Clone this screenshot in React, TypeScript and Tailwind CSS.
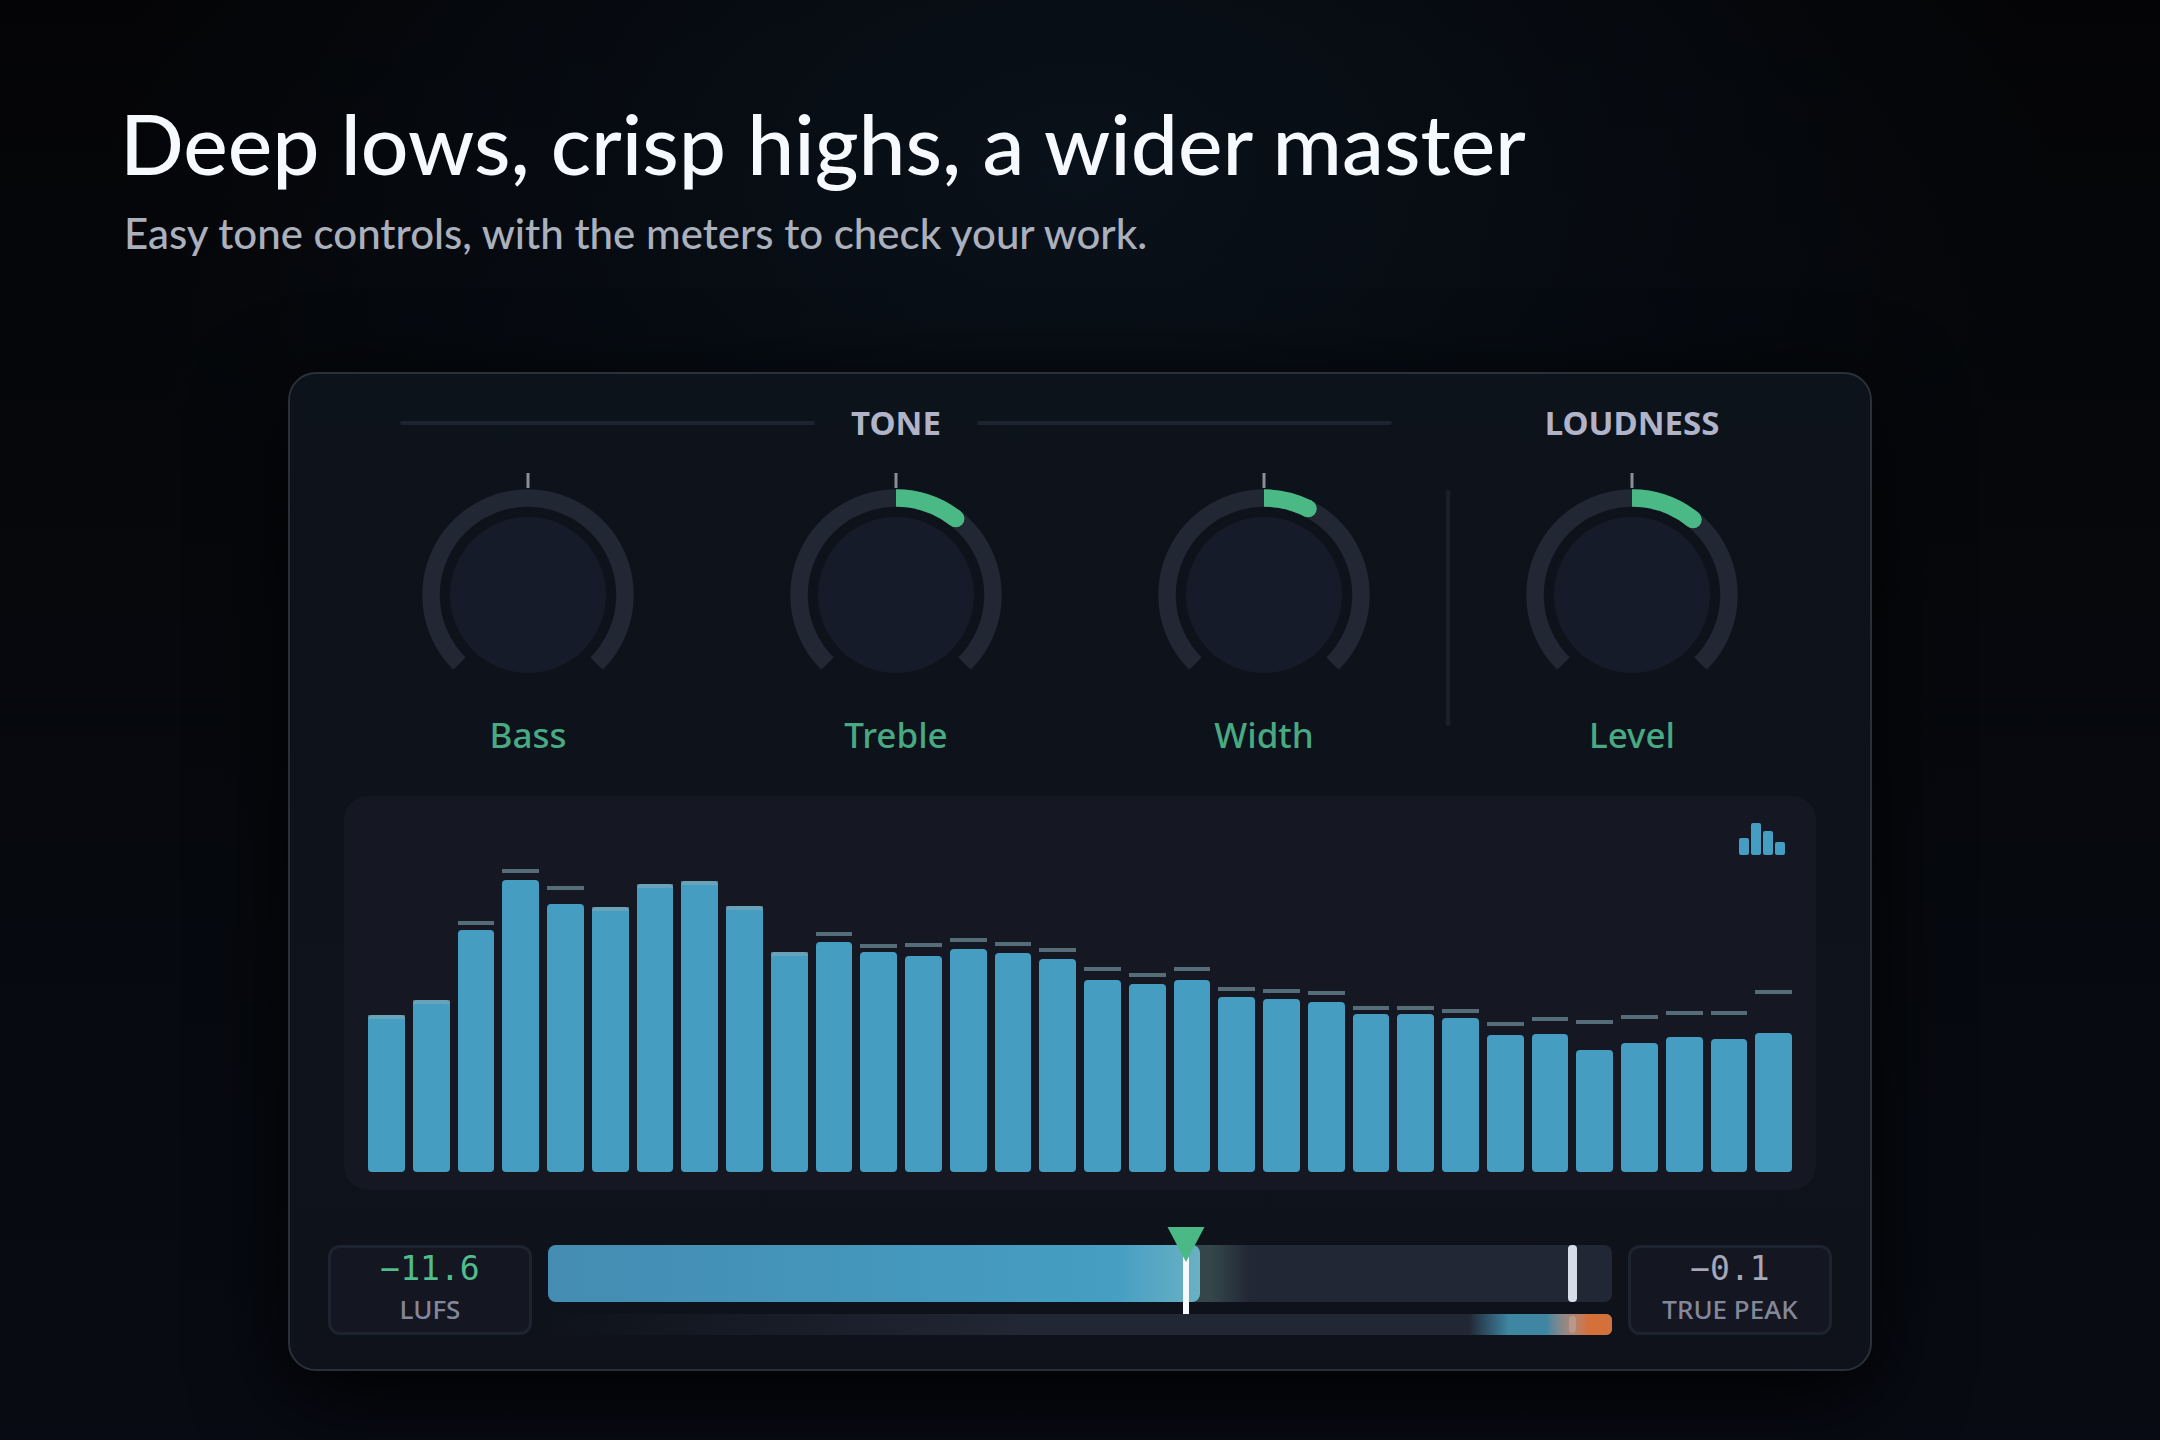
import { useState } from 'react'

type KnobProps = {
  id: string
  label: string
  initial: number
}

// [bar height, peak-hold height] per band, in pixels
const bands = [
  [157, 157], [172, 172], [242, 251], [292, 303], [268, 286], [265, 265], [288, 288], [291, 291],
  [266, 266], [220, 220], [230, 240], [220, 228], [216, 229], [223, 234], [219, 230], [213, 224],
  [192, 205], [188, 199], [192, 205], [175, 185], [173, 183], [170, 181], [158, 166], [158, 166],
  [154, 163], [137, 150], [138, 155], [122, 152], [129, 157], [135, 161], [133, 161], [139, 182],
]

const R = 97
const CX = 108
const CY = 123

function point(deg: number) {
  const a = (deg * Math.PI) / 180
  return [CX + R * Math.sin(a), CY - R * Math.cos(a)]
}

function arc(from: number, to: number) {
  const [x1, y1] = point(from)
  const [x2, y2] = point(to)
  const large = Math.abs(to - from) > 180 ? 1 : 0
  const sweep = to > from ? 1 : 0
  return `M${x1} ${y1}A${R} ${R} 0 ${large} ${sweep} ${x2} ${y2}`
}

function Knob({ id, label, initial }: KnobProps) {
  const [angle, setAngle] = useState(initial)
  const [tipX, tipY] = point(angle)

  return (
    <div className="flex flex-1 basis-0 flex-col items-center">
      <div className="relative">
        <svg width="216" height="211" viewBox="0 0 216 211" aria-hidden="true">
          <rect x="106.5" y="1" width="3" height="15" fill="#8a8d99" />
          <path d={arc(-135, 135)} fill="none" stroke="#212733" strokeWidth="17.5" />
          <circle cx={CX} cy={CY} r="78" fill="#161b2a" />
          {angle !== 0 && (
            <>
              <path d={arc(0, angle)} fill="none" stroke="#4bb985" strokeWidth="17.5" />
              <circle cx={tipX} cy={tipY} r="8.75" fill="#4bb985" />
            </>
          )}
        </svg>
        <input
          id={id}
          type="range"
          min={-135}
          max={135}
          value={angle}
          onChange={(e) => setAngle(Number(e.target.value))}
          className="absolute inset-0 h-full w-full cursor-pointer opacity-0"
        />
      </div>
      <label htmlFor={id} className="mt-7 text-[35px] leading-[48px] font-medium text-[#48a982]">
        {label}
      </label>
    </div>
  )
}

function Spectrum() {
  const [on, setOn] = useState(true)

  return (
    <section className="relative mx-[54px] mt-[37px] flex h-[394px] items-end gap-2 rounded-3xl bg-[#151722] px-6 pb-[18px]">
      {bands.map(([level, peak], i) => (
        <div key={i} className="relative flex-1">
          <div className="rounded-[4px] bg-[#459ec2]" style={{ height: level }} />
          {on && <div className="absolute inset-x-0 h-1 bg-[#80a7b4]/60" style={{ bottom: peak - 4 }} />}
        </div>
      ))}
      <button
        type="button"
        aria-label="Peak hold"
        aria-pressed={on}
        onClick={() => setOn(!on)}
        className="absolute top-[27px] right-[31px]"
      >
        <svg width="46" height="32" viewBox="0 0 46 32" fill="#459ec2">
          <rect x="0" y="15" width="10" height="17" rx="2" />
          <rect x="12" y="0" width="10" height="32" rx="2" />
          <rect x="24" y="8" width="10" height="24" rx="2" />
          <rect x="36" y="19" width="10" height="13" rx="2" />
        </svg>
      </button>
    </section>
  )
}

function Readout({ value, unit, valueClass }: { value: string; unit: string; valueClass: string }) {
  return (
    <div className="flex w-[204px] shrink-0 flex-col items-center justify-center rounded-xl border-[3px] border-[#1e242f] bg-[#141722]">
      <output className={`font-['DejaVu_Sans_Mono',monospace] text-[33px] leading-[38px] ${valueClass}`}>{value}</output>
      <span className="text-[26px] leading-[42px] font-medium text-[#84879a]">{unit}</span>
    </div>
  )
}

function Meters() {
  return (
    <section className="mx-[38px] mt-[55px] flex gap-4">
      <Readout value="−11.6" unit="LUFS" valueClass="text-[#51bd8c]" />
      <div className="flex flex-1 flex-col gap-3">
        <div className="relative h-[57px] rounded-lg bg-[#222735]">
          <div className="absolute inset-y-0 left-[60%] w-[6%] bg-linear-to-r from-[#34464a] from-40% to-[#222735]" />
          <div className="absolute inset-y-0 left-0 w-[61.3%] rounded-lg bg-linear-to-r from-[#448cb2] via-[#459ec3] via-87% to-[#69b1c4]" />
          <div className="absolute inset-y-0 left-[95.9%] w-[9px] rounded-sm bg-[#d6dde9]" />
          <svg className="absolute -top-[18px] left-[60%] -translate-x-1/2" width="38" height="88" viewBox="0 0 38 88">
            <rect x="16" y="24" width="6" height="63" fill="#f6fafd" />
            <path d="M0.500 0H37.500L19 35Z" fill="#4bb985" />
          </svg>
        </div>
        <div className="relative h-[21px] overflow-hidden rounded-r-md bg-linear-to-r from-transparent to-[#222735] to-45%">
          <div className="absolute inset-y-0 right-0 w-[13.4%] bg-linear-to-r from-transparent via-[#3e86a2] via-28% to-[#3e86a2] to-54%" />
          <div className="absolute inset-y-0 right-0 w-[6.2%] bg-linear-to-r from-[#3e86a2] via-[#a8877a] via-38% to-[#d4703a] to-64%" />
          <div className="absolute inset-y-[2px] left-[96%] w-[7px] rounded-sm bg-[#c3a596]/60" />
        </div>
      </div>
      <Readout value="−0.1" unit="TRUE PEAK" valueClass="text-[#a5a8b8]" />
    </section>
  )
}

export default function App() {
  return (
    <main className="min-h-screen bg-[radial-gradient(ellipse_45%_45%_at_50%_12%,#09111a,transparent),linear-gradient(to_bottom,#040406,#06080c_40%,#080b13)] px-[120px] pt-[95px] pb-[68px] font-['Noto_Sans',sans-serif]">
      <header className="font-['Lato',sans-serif] font-medium">
        <h1 className="text-[84px] leading-[96px] text-[#f6f9fe]">Deep lows, crisp highs, a wider master</h1>
        <p className="mt-[14px] pl-1 text-[42px] leading-[56px] text-[#abb0bd]">
          Easy tone controls, with the meters to check your work.
        </p>
      </header>

      <div className="mx-auto mt-[111px] w-full max-w-[1584px] rounded-[28px] border-2 border-[#2a2f38] bg-linear-to-b from-[#0d131b] to-[#0f121a] pb-[34px] shadow-[0_24px_90px_#000000]">
        <div className="mx-[54px] flex pt-7">
          <section className="flex-[3] basis-0">
            <div className="mx-14 flex h-[42px] items-center gap-9">
              <div className="h-1 flex-1 rounded-full bg-[#1d242f]" />
              <h2 className="text-[33px] font-bold text-[#b1b3c8]">TONE</h2>
              <div className="h-1 flex-1 rounded-full bg-[#1d242f]" />
            </div>
            <div className="mt-7 flex">
              <Knob id="bass" label="Bass" initial={0} />
              <Knob id="treble" label="Treble" initial={38} />
              <Knob id="width" label="Width" initial={27} />
            </div>
          </section>
          <div className="-mx-[2px] mt-[88px] h-[236px] w-1 rounded-full bg-[#19202a]" />
          <section className="flex-1 basis-0">
            <h2 className="flex h-[42px] items-center justify-center text-[33px] font-bold text-[#b1b3c8]">LOUDNESS</h2>
            <div className="mt-7 flex">
              <Knob id="level" label="Level" initial={39} />
            </div>
          </section>
        </div>
        <Spectrum />
        <Meters />
      </div>
    </main>
  )
}
